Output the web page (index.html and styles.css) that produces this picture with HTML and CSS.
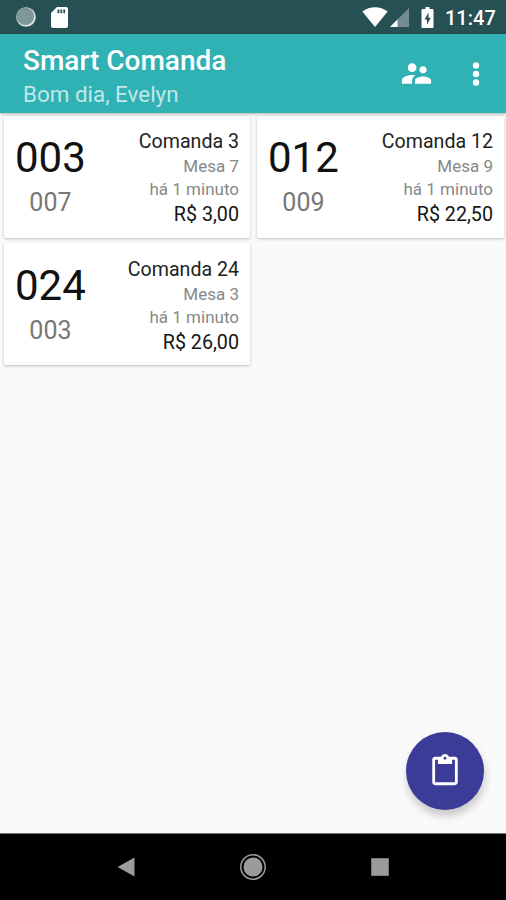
FILE: index.html
```html
<!DOCTYPE html>
<html lang="pt-BR">
<head>
<meta charset="utf-8">
<title>Smart Comanda</title>
<link rel="stylesheet" href="styles.css">
</head>
<body>
<div class="screen">
  <div class="status">
    <svg class="moon" viewBox="0 0 20 20"><circle cx="10" cy="10" r="9.8" fill="#dce3e3"/><circle cx="9.3" cy="9.3" r="8.8" fill="#809798"/></svg>
    <svg class="sd" viewBox="0 0 17 21"><path d="M6 0h9a2 2 0 0 1 2 2v17a2 2 0 0 1-2 2H2a2 2 0 0 1-2-2V6z" fill="#fff"/><path d="M6.500 2.600h1.800v3.600H6.500zM9.400 2.600h1.800v3.600H9.400zM12.300 2.600h1.800v3.600h-1.800z" fill="#275055"/></svg>
    <span class="spacer"></span>
    <svg class="wifi" viewBox="0 0 26 20"><path d="M.3 4.500C7.700-1.200 18.300-1.200 25.700 4.500L13 20z" fill="#fff"/></svg>
    <svg class="signal" viewBox="0 0 19 19"><path d="M19 0v19H0z" fill="#748c8f"/><path d="M7.500 11.500V19H0z" fill="#fff"/></svg>
    <svg class="battery" viewBox="0 0 12 21"><path d="M4 0h4v2h3a1 1 0 0 1 1 1v17a1 1 0 0 1-1 1H1a1 1 0 0 1-1-1V3a1 1 0 0 1 1-1h3z" fill="#fff"/><path d="M7 5.500L3 12.500h2.400V18L9.200 10.700H7z" fill="#275055"/></svg>
    <span class="clock">11:47</span>
  </div>
  <header class="appbar">
    <div class="titles">
      <h1>Smart Comanda</h1>
      <p>Bom dia, Evelyn</p>
    </div>
    <svg class="people" viewBox="0 0 24 24"><path fill="#fff" d="M16.500 12c1.380 0 2.490-1.120 2.490-2.500S17.880 7 16.500 7 14 8.120 14 9.500s1.120 2.500 2.500 2.500zM9 11c1.660 0 2.990-1.340 2.990-3S10.660 5 9 5 6 6.340 6 8s1.340 3 3 3zm7.500 3c-1.830 0-5.500.92-5.500 2.750V19h11v-2.250c0-1.830-3.670-2.750-5.500-2.750zM9 13c-2.330 0-7 1.170-7 3.500V19h7v-2.250c0-.85.33-2.340 2.370-3.470C10.500 13.100 9.660 13 9 13z"/></svg>
    <svg class="more" viewBox="0 0 8 24"><g fill="#fff"><circle cx="4" cy="3.500" r="3.200"/><circle cx="4" cy="12" r="3.200"/><circle cx="4" cy="20.500" r="3.200"/></g></svg>
  </header>
  <main class="grid">
    <article class="card">
      <div class="numbers"><div class="big">003</div><div class="small">007</div></div>
      <div class="info"><div class="name">Comanda 3</div><div class="meta">Mesa 7</div><div class="meta">há 1 minuto</div><div class="price">R$ 3,00</div></div>
    </article>
    <article class="card">
      <div class="numbers"><div class="big">012</div><div class="small">009</div></div>
      <div class="info"><div class="name">Comanda 12</div><div class="meta">Mesa 9</div><div class="meta">há 1 minuto</div><div class="price">R$ 22,50</div></div>
    </article>
    <article class="card">
      <div class="numbers"><div class="big">024</div><div class="small">003</div></div>
      <div class="info"><div class="name">Comanda 24</div><div class="meta">Mesa 3</div><div class="meta">há 1 minuto</div><div class="price">R$ 26,00</div></div>
    </article>
  </main>
  <button class="fab" aria-label="Nova comanda"><svg viewBox="0 0 24 24"><path fill="#fff" d="M19 2h-4.180C14.400.84 13.300 0 12 0S9.600.84 9.180 2H5c-1.100 0-2 .9-2 2v16c0 1.100.9 2 2 2h14c1.100 0 2-.9 2-2V4c0-1.100-.9-2-2-2zm-7 0c.55 0 1 .45 1 1s-.45 1-1 1-1-.45-1-1 .45-1 1-1zm7 18H5V4h2v3h10V4h2z"/></svg></button>
  <nav class="nav">
    <svg viewBox="0 0 28 28"><path d="M5.500 14L22.500 4.500v19z" fill="#9b9b9b"/></svg>
    <svg viewBox="0 0 28 28"><circle cx="14" cy="14" r="12.200" fill="none" stroke="#9b9b9b" stroke-width="1.500"/><circle cx="14" cy="14" r="9.500" fill="#9b9b9b"/></svg>
    <svg viewBox="0 0 28 28"><path d="M5.200 5.200h17.600v17.600H5.200z" fill="#9b9b9b"/></svg>
  </nav>
</div>
</body>
</html>
```
FILE: styles.css
```css
* { box-sizing: border-box; }
body { margin: 0; font-family: Roboto, sans-serif; }
h1, p { margin: 0; font-weight: 400; }
svg { display: block; flex: none; }

.screen {
  position: relative;
  display: flex;
  flex-direction: column;
  width: 506px;
  height: 900px;
  overflow: hidden;
  background: #fafafa;
}

.status {
  display: flex;
  align-items: center;
  height: 34px;
  padding: 0 11px 0 16px;
  background: #275055;
}
.moon { width: 20px; height: 20px; }
.sd { width: 17px; height: 21px; margin-left: 15px; }
.spacer { flex: 1; }
.wifi { width: 26px; height: 20px; }
.signal { width: 19px; height: 19px; margin: 1px 0 0 2px; }
.battery { width: 13px; height: 21px; margin: 0 11px 0 12px; }
.clock {
  width: 50px;
  padding-top: 2px;
  font-size: 20px;
  font-weight: 500;
  line-height: 34px;
  white-space: nowrap;
  color: #fff;
}

.appbar {
  position: relative;
  display: flex;
  align-items: center;
  height: 79px;
  padding: 0 26px 0 23px;
  background: #30b1b3;
  box-shadow: 0 1px 3px rgba(0, 0, 0, .3);
}
.titles { flex: 1; padding-top: 7px; color: #fff; }
.titles h1 { font-size: 28px; line-height: 34px; font-weight: 500; }
.titles p { font-size: 22.400px; line-height: 33px; color: #c0e8e8; }
.people { width: 35px; height: 35px; }
.more { width: 8px; height: 24px; margin-left: 38px; }

.grid {
  flex: 1;
  display: grid;
  grid-template-columns: 246px 247px;
  grid-auto-rows: 122px;
  align-content: start;
  gap: 5.500px 7px;
  padding: 2.500px 2px 0 4px;
}
.card {
  display: flex;
  justify-content: space-between;
  padding: 13.500px 11px 0;
  border-radius: 2px;
  background: #fff;
  box-shadow: 0 1px 3px rgba(0, 0, 0, .24);
}
.numbers { text-align: center; }
.big { margin-top: 5px; font-size: 42px; line-height: 48px; color: #111; }
.small { margin-top: 6px; font-size: 25px; line-height: 30px; color: #777; }
.info { text-align: right; white-space: nowrap; }
.name { font-size: 19.600px; line-height: 26px; color: #222; }
.meta { font-size: 17px; line-height: 23px; color: #888; }
.price { margin-top: 1px; font-size: 19.700px; line-height: 26px; color: #151515; }

.fab {
  position: absolute;
  left: 406px;
  top: 732px;
  display: grid;
  place-items: center;
  width: 78px;
  height: 78px;
  padding: 0;
  border: 0;
  border-radius: 50%;
  background: #3b3b98;
  box-shadow: 1px 6px 9px rgba(0, 0, 0, .2);
}
.fab svg { width: 34px; height: 34px; }

.nav {
  display: flex;
  align-items: center;
  justify-content: space-between;
  height: 67px;
  padding: 0 112px;
  border-top: 1px solid #777;
  background: #000;
}
.nav svg { width: 28px; height: 28px; }
```
